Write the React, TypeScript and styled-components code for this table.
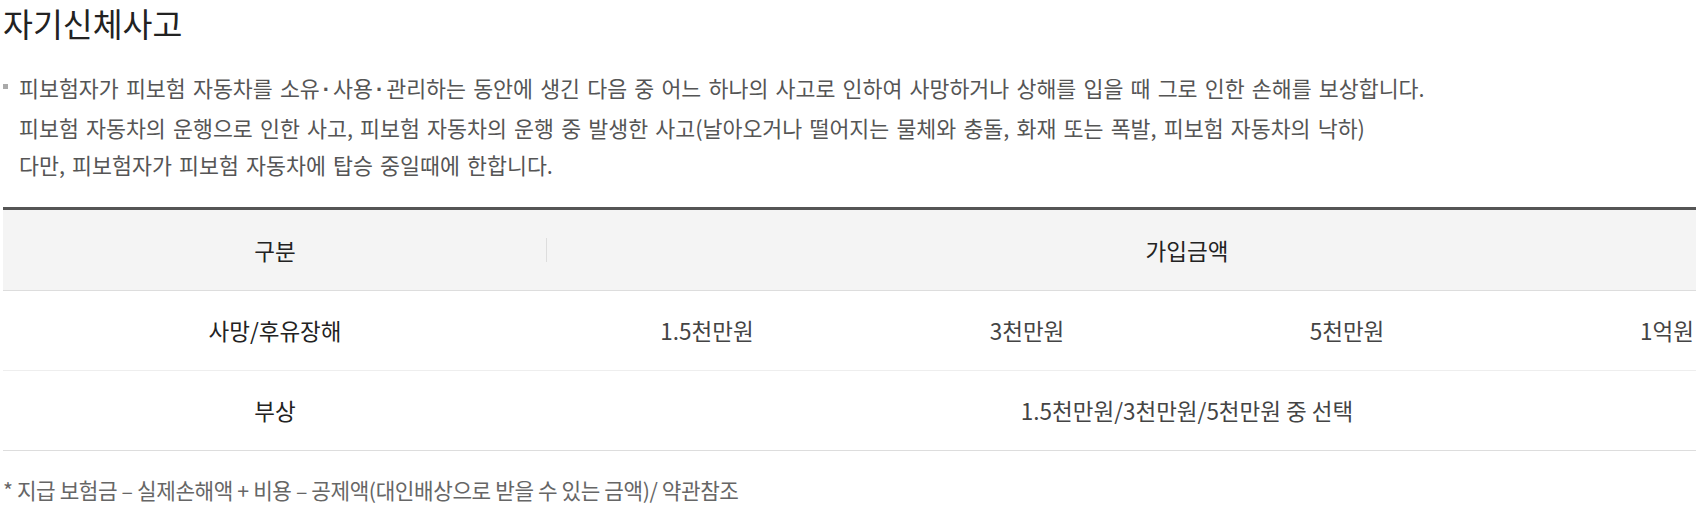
import styled, { createGlobalStyle } from "styled-components";

const GlobalStyle = createGlobalStyle`
  html, body {
    margin: 0;
    padding: 0;
    overflow: hidden;
    background: #fff;
  }
  body {
    font-family: "Noto Sans CJK KR", "Noto Sans", sans-serif;
    color: #333;
  }
`;

const amounts = ["1.5천만원", "3천만원", "5천만원", "1억원"];

const App = () => {
  return (
    <>
      <GlobalStyle />
      <Wrapper>
        <Title>자기신체사고</Title>
        <Notice>
          <Bullet />
          <NoticeText>
            피보험자가 피보험 자동차를 소유<Dot>·</Dot>사용<Dot>·</Dot>관리하는 동안에 생긴 다음
            중 어느 하나의 사고로 인하여 사망하거나 상해를 입을 때 그로 인한 손해를 보상합니다.
            <br />
            피보험 자동차의 운행으로 인한 사고, 피보험 자동차의 운행 중 발생한 사고(날아오거나
            떨어지는 물체와 충돌, 화재 또는 폭발, 피보험 자동차의 낙하)
            <br />
            다만, 피보험자가 피보험 자동차에 탑승 중일때에 한합니다.
          </NoticeText>
        </Notice>
        <Table>
          <colgroup>
            <col style={{ width: "544px" }} />
            <col style={{ width: "320px" }} />
            <col style={{ width: "320px" }} />
            <col style={{ width: "320px" }} />
            <col style={{ width: "320px" }} />
          </colgroup>
          <thead>
            <tr>
              <Th $divider>구분</Th>
              <Th colSpan={4}>가입금액</Th>
            </tr>
          </thead>
          <tbody>
            <Row>
              <Label>사망/후유장해</Label>
              {amounts.map((amount) => (
                <Value key={amount}>{amount}</Value>
              ))}
            </Row>
            <Row $last>
              <Label>부상</Label>
              <Value colSpan={4}>1.5천만원/3천만원/5천만원 중 선택</Value>
            </Row>
          </tbody>
        </Table>
        <Footnote>
          * 지급 보험금 – 실제손해액 + 비용 – 공제액(대인배상으로 받을 수 있는 금액)/ 약관참조
        </Footnote>
      </Wrapper>
    </>
  );
};

const Wrapper = styled.div`
  width: 1824px;
  padding-left: 3px;
`;

const Title = styled.h2`
  margin: 0;
  font-size: 32.5px;
  font-weight: 400;
  line-height: 46px;
  color: #222;
`;

const Notice = styled.div`
  display: flex;
  align-items: flex-start;
  margin-top: 23px;
`;

const Bullet = styled.span`
  flex-shrink: 0;
  width: 5px;
  height: 5px;
  margin-top: 15px;
  margin-right: 11px;
  background: #aaa;
`;

const NoticeText = styled.p`
  margin: 0;
  font-size: 21.7px;
  line-height: 37.5px;
  word-spacing: 2.3px;
  color: #555;
  white-space: nowrap;
`;

const Dot = styled.span`
  margin: 0 3px;
  font-family: "Liberation Sans", sans-serif;
  font-weight: 700;
`;

const Table = styled.table`
  width: 1824px;
  margin-top: 23px;
  table-layout: fixed;
  border-collapse: collapse;
  border-top: 3px solid #555;
  font-size: 22.5px;
`;

const Th = styled.th<{ $divider?: boolean }>`
  position: relative;
  height: 80px;
  padding: 0;
  background: #f4f4f4;
  border-bottom: 1px solid #ddd;
  font-weight: 400;
  color: #222;
  text-align: center;

  &::after {
    content: "";
    display: ${(p) => (p.$divider ? "block" : "none")};
    position: absolute;
    top: 50%;
    right: 0;
    width: 1px;
    height: 24px;
    background: #ddd;
    transform: translateY(-50%);
  }
`;

const Row = styled.tr<{ $last?: boolean }>`
  td {
    height: 79px;
    padding: 0;
    border-bottom: 1px solid ${(p) => (p.$last ? "#ddd" : "#eee")};
    text-align: center;
  }
`;

const Label = styled.td`
  color: #222;
`;

const Value = styled.td`
  color: #444;
`;

const Footnote = styled.p`
  margin: 24px 0 0;
  font-size: 21.3px;
  line-height: 30px;
  letter-spacing: -0.4px;
  color: #666;
`;

export default App;
